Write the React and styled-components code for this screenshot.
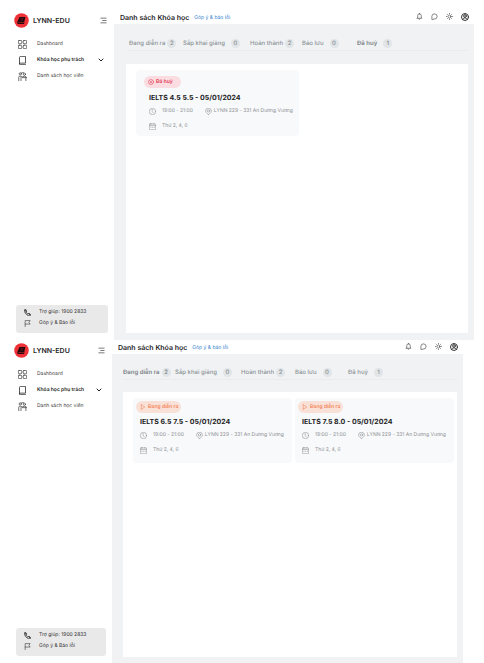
import React from "react";
import styled, { createGlobalStyle } from "styled-components";

const GlobalStyle = createGlobalStyle`
  * { box-sizing: border-box; }
  body { margin: 0; background: #fff; color: #1d1d1f; font-family: Inter, "Noto Sans", sans-serif; font-size: 5px; line-height: 7px; text-rendering: geometricPrecision; }
  button, a { font: inherit; color: inherit; text-decoration: none; }
  button { border: 0; padding: 0; background: none; cursor: pointer; text-rendering: inherit; }
  h1, h2, p { margin: 0; }
`;

const Svg = styled.svg`
  display: block;
  flex: none;
  width: ${(p) => p.$size}px;
  height: ${(p) => p.$size}px;
  fill: none;
  stroke: currentColor;
  stroke-width: ${(p) => p.$weight};
  stroke-linecap: round;
  stroke-linejoin: round;
`;

const drawings = {
  menu: <path d="M3 4h18M9 12h12M3 20h18" />,
  grid: (
    <>
      <rect x="1" y="1" width="9" height="9" rx="2" />
      <rect x="14" y="1" width="9" height="9" rx="2" />
      <rect x="1" y="14" width="9" height="9" rx="2" />
      <rect x="14" y="14" width="9" height="9" rx="2" />
    </>
  ),
  book: <path d="M4 21V4a3 3 0 0 1 3-3h13v18H6a2 2 0 0 0-2 2 2 2 0 0 0 2 2h14" />,
  students: (
    <>
      <circle cx="6" cy="5" r="3" />
      <path d="M2 23v-9q0-3 3-3l7 2M8 23v-8M10 2h5" />
      <circle cx="17" cy="6" r="3" />
      <path d="M11 15h12M21 15v8M14 12q3-2 7 0" />
    </>
  ),
  chevron: <path d="M4 8l8 8 8-8" />,
  phone: (
    <>
      <path d="M3 3c2-2 4-1 5 1l1 3c0 2-2 2-2 4 1 3 4 5 6 6 2 0 2-2 4-2l4 2c2 1 2 3 1 5-6 5-24-7-19-19z" />
      <path d="M8 9l-4-4M20 20l-4-4" />
    </>
  ),
  flag: <path d="M4 23V2h17l-4 6 4 6H4" />,
  bell: <path d="M4 18h16l-2-4V9a6 6 0 0 0-12 0v5zM10 21q2 2 4 0M12 3V1" />,
  chat: <path d="M3 21V11a9 9 0 1 1 9 10z" />,
  sun: (
    <>
      <circle cx="12" cy="12" r="5" />
      <path d="M12 1v2M12 21v2M1 12h2M21 12h2M4 4l1 1M19 19l1 1M4 20l1-1M19 5l1-1" />
    </>
  ),
  user: (
    <>
      <circle cx="12" cy="12" r="10.500" />
      <circle cx="12" cy="9" r="4" />
      <path d="M5 19c2-6 12-6 14 0" />
    </>
  ),
  cancel: (
    <>
      <circle cx="12" cy="12" r="10" />
      <path d="M8 8l8 8M16 8l-8 8" />
    </>
  ),
  play: <path d="M5 3v18M5 3l14 9-14 9" />,
  clock: (
    <>
      <circle cx="12" cy="12" r="11" />
      <path d="M11 5v7l3 4" />
    </>
  ),
  pin: (
    <>
      <path d="M12 23C5 17 2 14 2 10a10 9 0 0 1 20 0c0 4-3 7-10 13z" />
      <circle cx="12" cy="10" r="4" />
    </>
  ),
  calendar: (
    <>
      <rect x="1" y="3" width="22" height="20" rx="3" />
      <path d="M1 9h22M7 1v3M17 1v3" />
      <path d="M6 15h1M12 15h1M18 15h1" />
    </>
  ),
};

const Icon = ({ name, size = 8, weight = 2 }) => (
  <Svg viewBox="0 0 24 24" $size={size} $weight={weight} aria-hidden="true">
    {drawings[name]}
  </Svg>
);

const Screen = styled.section`
  display: flex;
  padding-right: ${(p) => (p.$compact ? 21 : 10)}px;
`;

const Sidebar = styled.aside`
  flex: none;
  width: ${(p) => (p.$compact ? 112 : 114)}px;
  display: flex;
  flex-direction: column;
  padding: ${(p) => (p.$compact ? "3px 6px 7px 14px" : "13px 6px 7px 14px")};
`;

const Brand = styled.div`
  display: flex;
  align-items: center;
  gap: 4px;
  height: 15px;
  padding-right: 1px;
  font-size: 7px;
  font-weight: 600;
`;

const Logo = styled.svg`
  width: 15px;
  height: 15px;
`;

const MenuButton = styled.button`
  margin-left: auto;
`;

const Nav = styled.nav`
  display: flex;
  flex-direction: column;
  margin-top: 8px;
  padding-left: 4px;
`;

const NavLink = styled.a`
  display: flex;
  align-items: center;
  gap: 10px;
  height: 16px;
  padding-right: 4px;
  && { color: ${(p) => (p.$active ? "#222" : "#444")}; }
  font-weight: ${(p) => (p.$active ? 600 : 400)};

  svg:nth-of-type(2) { margin-left: auto; }
`;

const HelpBox = styled.div`
  margin: auto 0 0 2px;
  padding: 2px 8px 4px;
  border-radius: 3px;
  background: #e9e9e9;
`;

const HelpLink = styled.a`
  display: flex;
  align-items: center;
  gap: 8px;
  height: 11px;
  && { color: #333; }
`;

const Main = styled.main`
  flex: 1;
  min-width: 0;
  display: flex;
  flex-direction: column;
`;

const Header = styled.header`
  display: flex;
  align-items: center;
  gap: 5px;
  height: ${(p) => (p.$compact ? 14 : 24)}px;
  padding: ${(p) => (p.$compact ? "2px 5px 0 6px" : "12px 5px 0 6px")};
`;

const PageTitle = styled.h1`
  font-size: 7px;
  line-height: 10px;
  font-weight: 600;
  white-space: nowrap;
`;

const FeedbackLink = styled.a`
  && { color: #3182ce; }
`;

const Actions = styled.div`
  display: flex;
  align-items: center;
  gap: 8px;
  height: 10px;
  margin: 0 0 3px auto;
  color: #333;
`;

const Workspace = styled.div`
  padding: ${(p) => (p.$compact ? "11px 6px 6px 11px" : "12px 6px 7px 12px")};
  background: #f0f2f4;
`;

const Tabs = styled.div`
  display: flex;
  margin-left: ${(p) => (p.$compact ? 0 : 3)}px;
  border-bottom: 1px solid #e9ebed;
`;

const Tab = styled.button`
  display: flex;
  flex: none;
  align-items: center;
  gap: ${(p) => (p.$loose ? 6 : 2)}px;
  width: ${(p) => p.$width}px;
  height: 14px;
  && {
    color: ${(p) => (p.$active ? "#7d8287" : "#8d9297")};
    font-size: 6px;
    line-height: 7px;
    font-weight: ${(p) => (p.$active ? 600 : 500)};
  }
  white-space: nowrap;
`;

const Count = styled.span`
  display: grid;
  place-items: center;
  width: 9px;
  height: 9px;
  border-radius: 50%;
  background: #e1e5e7;
  font-weight: 500;
`;

const Board = styled.div`
  display: grid;
  grid-template-columns: repeat(2, minmax(0, 1fr));
  align-content: start;
  gap: 3px;
  min-height: ${(p) => (p.$compact ? 265 : 269)}px;
  margin-top: ${(p) => (p.$compact ? 12 : 13)}px;
  padding: 6px 3px 6px 10px;
  background: #fff;
`;

const Card = styled.article`
  padding: ${(p) => (p.$compact ? "3px 3px 5px" : "6px 8px 2px")};
  border-radius: 4px;
  background: #f8f9fb;
`;

const Status = styled.span`
  display: inline-flex;
  align-items: center;
  gap: 2px;
  height: 12px;
  padding: 0 ${(p) => (p.$cancelled ? 8 : 3)}px 0 4px;
  border-radius: 6px;
  background: ${(p) => (p.$cancelled ? "#fadce1" : "#fae1d7")};
  color: ${(p) => (p.$cancelled ? "#e5374f" : "#f2784b")};
  font-weight: ${(p) => (p.$cancelled ? 600 : 500)};
  vertical-align: top;
  white-space: nowrap;
`;

const CardBody = styled.div`
  padding-left: ${(p) => (p.$compact ? 4 : 5)}px;
`;

const CourseTitle = styled.h2`
  padding: ${(p) => (p.$compact ? 3 : 4)}px 0 1px;
  font-size: 7px;
  line-height: 11px;
  font-weight: 700;
  white-space: nowrap;
`;

const Details = styled.div`
  display: flex;
  align-items: center;
  height: 15px;
  gap: 12px;
  color: #8e9194;
  white-space: nowrap;
`;

const Detail = styled.p`
  display: flex;
  align-items: center;
  gap: ${(p) => (p.$tight ? 2 : 6)}px;
`;

const screens = [
  {
    id: "cancelled",
    compact: false,
    active: "Đã huỷ",
    widths: [54, 67, 52, 55, 40],
    courses: ["IELTS 4.5 5.5 - 05/01/2024"],
  },
  {
    id: "running",
    compact: true,
    active: "Đang diễn ra",
    widths: [52, 66, 54, 53, 40],
    courses: ["IELTS 6.5 7.5 - 05/01/2024", "IELTS 7.5 8.0 - 05/01/2024"],
  },
];

const tabs = [
  { label: "Đang diễn ra", count: 2 },
  { label: "Sắp khai giảng", count: 0, loose: true },
  { label: "Hoàn thành", count: 2 },
  { label: "Bảo lưu", count: 0, loose: true },
  { label: "Đã huỷ", count: 1, loose: true },
];

const actions = [
  ["bell", "Thông báo"],
  ["chat", "Tin nhắn"],
  ["sun", "Giao diện"],
  ["user", "Tài khoản"],
];

function SideMenu({ compact }) {
  return (
    <Sidebar $compact={compact}>
      <Brand>
        <Logo viewBox="0 0 30 30" aria-hidden="true">
          <circle cx="15" cy="15" r="14.500" fill="#ef3036" />
          <path d="M11 8h12l-3 11H9q-2 1 0 1h11l2-6-2 8H9q-4-1-2-5z" fill="#21090b" />
          <path d="M13 11h6M12 14h6" stroke="#8b1d22" strokeWidth="1" />
        </Logo>
        <span>LYNN-EDU</span>
        <MenuButton aria-label="Thu gọn menu"><Icon name="menu" size={7} weight={2} /></MenuButton>
      </Brand>
      <Nav>
        <NavLink href="#dashboard"><Icon name="grid" size={9} /><span>Dashboard</span></NavLink>
        <NavLink href="#courses" $active>
          <Icon name="book" size={9} /><span>Khóa học phụ trách</span><Icon name="chevron" size={6} weight={4} />
        </NavLink>
        <NavLink href="#students"><Icon name="students" size={9} /><span>Danh sách học viên</span></NavLink>
      </Nav>
      <HelpBox>
        <HelpLink href="tel:19002833"><Icon name="phone" size={7} weight={3} /><span>Trợ giúp: 1900 2833</span></HelpLink>
        <HelpLink href="#feedback"><Icon name="flag" size={7} weight={2} /><span>Góp ý &amp; Báo lỗi</span></HelpLink>
      </HelpBox>
    </Sidebar>
  );
}

function CourseCard({ title, compact }) {
  return (
    <Card $compact={compact}>
      <Status $cancelled={!compact}>
        <Icon name={compact ? "play" : "cancel"} size={6} weight={2} />
        {compact ? "Đang diễn ra" : "Đã huỷ"}
      </Status>
      <CardBody $compact={compact}>
        <CourseTitle $compact={compact}>{title}</CourseTitle>
        <Details>
          <Detail><Icon name="clock" size={7} weight={2} />19:00 - 21:00</Detail>
          <Detail $tight><Icon name="pin" size={7} weight={2} />LYNN 229 - 331 An Dương Vương</Detail>
        </Details>
        <Details>
          <Detail><Icon name="calendar" size={7} weight={2} />Thứ 2, 4, 6</Detail>
        </Details>
      </CardBody>
    </Card>
  );
}

function CourseScreen({ compact, active, widths, courses }) {
  return (
    <Screen $compact={compact}>
      <SideMenu compact={compact} />
      <Main>
        <Header $compact={compact}>
          <PageTitle>Danh sách Khóa học</PageTitle>
          <FeedbackLink href="#feedback">Góp ý &amp; báo lỗi</FeedbackLink>
          <Actions>
            {actions.map(([name, label]) => (
              <button key={name} aria-label={label}><Icon name={name} size={name === "user" ? 8 : 7} weight={name === "user" ? 3 : 2} /></button>
            ))}
          </Actions>
        </Header>
        <Workspace $compact={compact}>
          <Tabs role="tablist" $compact={compact}>
            {tabs.map(({ label, count, loose }, i) => (
              <Tab key={label} role="tab" aria-selected={label === active} $active={label === active} $loose={loose} $width={widths[i]}>
                <span>{label}</span><Count>{count}</Count>
              </Tab>
            ))}
          </Tabs>
          <Board $compact={compact}>
            {courses.map((title) => <CourseCard key={title} title={title} compact={compact} />)}
          </Board>
        </Workspace>
      </Main>
    </Screen>
  );
}

export default function App() {
  return (
    <>
      <GlobalStyle />
      {screens.map((screen) => <CourseScreen key={screen.id} {...screen} />)}
    </>
  );
}
